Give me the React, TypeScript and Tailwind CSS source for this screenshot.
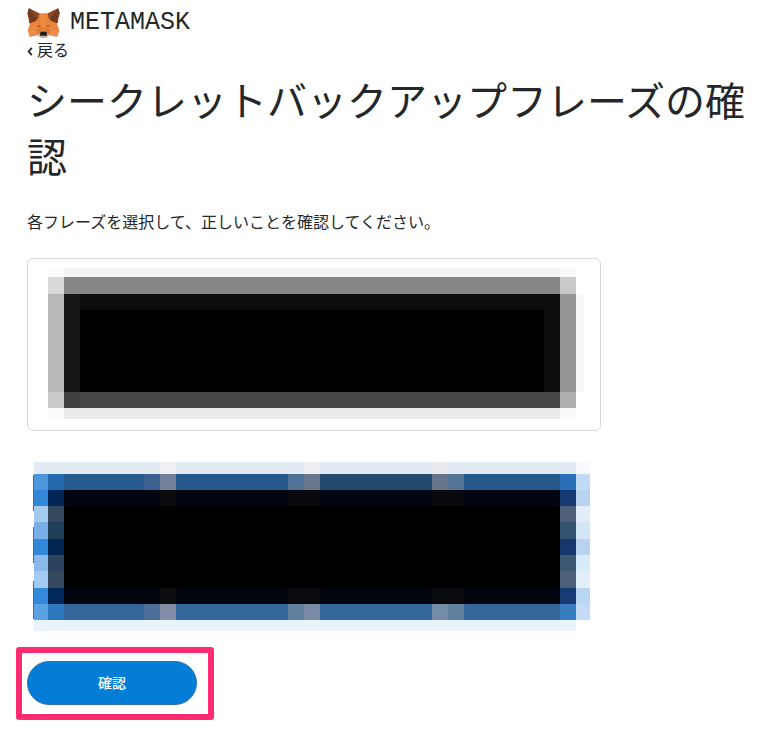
type Block = [x: number, y: number, w: number, h: number, fill: string];

const selectedBlocks: Block[] = [
  [20, 9, 16, 9, "#fcfcfc"],
  [36, 9, 496, 9, "#f4f4f4"],
  [532, 9, 16, 9, "#fafafa"],
  [20, 18, 16, 17, "#dadada"],
  [36, 18, 496, 17, "#878787"],
  [532, 18, 16, 17, "#cacaca"],
  [20, 35, 16, 98, "#b9b9b9"],
  [36, 35, 496, 98, "#151515"],
  [52, 35, 480, 17, "#0d0d0d"],
  [52, 51, 464, 82, "#000000"],
  [516, 51, 16, 82, "#0e0e0f"],
  [532, 35, 16, 98, "#959596"],
  [548, 35, 8, 98, "#f7f7f8"],
  [20, 133, 16, 16, "#cacaca"],
  [36, 133, 496, 16, "#464646"],
  [36, 133, 16, 16, "#404040"],
  [532, 133, 16, 16, "#afafaf"],
  [20, 149, 16, 11, "#fbfbfb"],
  [36, 149, 496, 11, "#ebebeb"],
  [532, 149, 16, 11, "#fafafc"],
];

const wordBlocks: Block[] = [
  // light edges above and below
  [7, 0, 542, 12, "#e2ebf4"],
  [133, 0, 16, 12, "#f0f1f4"],
  [277, 0, 16, 12, "#edeff3"],
  [405, 0, 16, 12, "#e9ebf0"],
  [549, 0, 14, 12, "#f8f9fc"],
  [7, 158, 542, 11, "#e8f3fa"],
  // top row
  [7, 12, 14, 16, "#4c97db"],
  [21, 12, 16, 16, "#2269ad"],
  [37, 12, 80, 16, "#285b8f"],
  [117, 12, 16, 16, "#3c6090"],
  [133, 12, 16, 16, "#747f9b"],
  [149, 12, 112, 16, "#27588c"],
  [261, 12, 16, 16, "#4f7297"],
  [277, 12, 16, 16, "#6a768d"],
  [293, 12, 112, 16, "#244a72"],
  [405, 12, 16, 16, "#68758d"],
  [421, 12, 16, 16, "#547596"],
  [437, 12, 96, 16, "#275a8b"],
  [533, 12, 16, 16, "#2970b8"],
  [549, 12, 14, 16, "#c1daf5"],
  // middle
  [37, 28, 496, 16, "#02050f"],
  [37, 44, 496, 82, "#000000"],
  [37, 126, 496, 16, "#02050d"],
  [133, 28, 16, 16, "#0b0c10"],
  [261, 28, 32, 16, "#080a0f"],
  [405, 28, 32, 16, "#080a0f"],
  [133, 126, 16, 16, "#0d0e10"],
  [261, 126, 32, 16, "#090b0e"],
  [405, 126, 32, 16, "#090b0e"],
  // left columns
  [7, 28, 14, 16, "#3487d8"],
  [7, 44, 14, 16, "#a4caee"],
  [7, 60, 14, 17, "#76b0e6"],
  [7, 77, 14, 16, "#3188d9"],
  [7, 93, 14, 16, "#8bbaea"],
  [7, 109, 14, 17, "#a3caf1"],
  [7, 126, 14, 16, "#3489dd"],
  [21, 28, 16, 16, "#022658"],
  [21, 44, 16, 16, "#33485d"],
  [21, 60, 16, 17, "#213e59"],
  [21, 77, 16, 16, "#022650"],
  [21, 93, 16, 16, "#2b435c"],
  [21, 109, 16, 17, "#34495e"],
  [21, 126, 16, 16, "#022759"],
  // right columns
  [533, 28, 16, 16, "#173972"],
  [533, 44, 16, 16, "#505f7a"],
  [533, 60, 16, 17, "#335370"],
  [533, 77, 16, 16, "#16366d"],
  [533, 93, 16, 16, "#3d5872"],
  [533, 109, 16, 17, "#4d6079"],
  [533, 126, 16, 16, "#173c75"],
  [549, 28, 14, 16, "#b7d3f0"],
  [549, 44, 14, 16, "#e2edf7"],
  [549, 60, 14, 17, "#d3e6f5"],
  [549, 77, 14, 16, "#b9d4f1"],
  [549, 93, 14, 16, "#d7eaf8"],
  [549, 109, 14, 17, "#e2eff8"],
  [549, 126, 14, 16, "#b9d6f2"],
  // bottom row
  [7, 142, 14, 16, "#5aa2e3"],
  [21, 142, 16, 16, "#2d75bd"],
  [37, 142, 80, 16, "#336799"],
  [117, 142, 16, 16, "#4b6d9a"],
  [133, 142, 16, 16, "#848da6"],
  [149, 142, 112, 16, "#33689b"],
  [261, 142, 16, 16, "#6080a0"],
  [277, 142, 16, 16, "#7b8ba5"],
  [293, 142, 112, 16, "#33689b"],
  [405, 142, 16, 16, "#758ca6"],
  [421, 142, 16, 16, "#6080a0"],
  [437, 142, 96, 16, "#336799"],
  [533, 142, 16, 16, "#387dbd"],
  [549, 142, 14, 16, "#c3dcf5"],
  // button edges showing on the left
  [6, 13, 1, 36, "#1978bd"],
  [6, 65, 1, 36, "#1978bd"],
  [6, 119, 1, 38, "#1978bd"],
];

function Mosaic({ blocks, height }: { blocks: Block[]; height: number }) {
  return (
    <svg
      viewBox={`0 0 572 ${height}`}
      shapeRendering="crispEdges"
      className="block w-full"
      aria-hidden="true"
    >
      {blocks.map(([x, y, w, h, fill], i) => (
        <rect key={i} x={x} y={y} width={w} height={h} fill={fill} />
      ))}
    </svg>
  );
}

function Fox() {
  return (
    <svg viewBox="0 0 100 92" className="h-[30px] w-[33px]" aria-hidden="true">
      <path d="M5 1 38 17h24L95 1l4 14-5 29-3 5 7 19-6 20-24-5-10 8H42l-10-8-24 5-6-20 7-19-3-5L1 15z" fill="#e8803a" />
      <path d="M5 1 34 19l-6 20-20 8-3-5 2-4-3-3 3-4-4-3L1 15zM95 1 66 19l6 20 20 8 3-5-2-4 3-3-3-4 4-3 3-13z" fill="#6f3c22" />
      <path d="m5 1 33 16-5 18zM95 1 62 17l5 18z" fill="#8d4a28" />
      <path d="m38 17 4 41h16l4-41z" fill="#ee8a3e" />
      <path d="m9 49 31-8 3 18-15 9H2zM91 49l-31-8-3 18 15 9h26z" fill="#ec853a" />
      <path d="M2 68h26l4 15-24 5zM98 68H72l-4 15 24 5z" fill="#ec8c50" />
      <path d="m28 68 15-9-3 18-8 6zM72 68l-15-9 3 18 8 6z" fill="#dc7636" />
      <path d="m29 56 9-4 2 6zM71 56l-9-4-2 6z" fill="#96532c" />
      <path d="m32 83 8-7h20l8 7-10 8H42z" fill="#c5b7aa" />
      <path d="m40 76 2-3h16l2 3 1 9H39z" fill="#1c1c20" />
    </svg>
  );
}

export default function App() {
  return (
    <main
      lang="ja"
      className="bg-white px-[27px] pt-2 pb-4 font-['Liberation_Sans','Noto_Sans_CJK_JP',sans-serif] text-[#24272a]"
    >
      <header className="flex h-[30px] items-center gap-[10px]">
        <Fox />
        <span className="font-['Liberation_Mono',monospace] text-[25px] leading-7">
          METAMASK
        </span>
      </header>

      <a href="#back" className="flex h-[26px] w-fit items-center gap-1 text-base">
        <svg viewBox="0 0 6 10" className="h-[9px] w-[6px]" fill="none" stroke="currentColor" strokeWidth="2" aria-hidden="true">
          <path d="M5 1 1.5 5 5 9" />
        </svg>
        戻る
      </a>

      <h1 className="mt-[10px] text-[40px] leading-14 break-all">
        シークレットバックアップフレーズの確認
      </h1>

      <p className="mt-[25px] text-base leading-6">
        各フレーズを選択して、正しいことを確認してください。
      </p>

      <div className="mt-[23px] max-w-[574px] rounded-md border border-[#d6d9dc]">
        <Mosaic blocks={selectedBlocks} height={171} />
      </div>

      <div className="mt-[31px] max-w-[572px]">
        <Mosaic blocks={wordBlocks} height={169} />
      </div>

      <div className="relative mt-[30px] w-fit">
        <button
          type="button"
          className="block h-11 w-[170px] rounded-full border border-[#2a72b5] bg-[#037dd6] text-sm font-medium text-white"
        >
          確認
        </button>
        <div className="pointer-events-none absolute -top-[14px] -right-[17px] -bottom-[15px] -left-[11px] rounded-[3px] border-6 border-[#ff2d6f]" />
      </div>
    </main>
  );
}
